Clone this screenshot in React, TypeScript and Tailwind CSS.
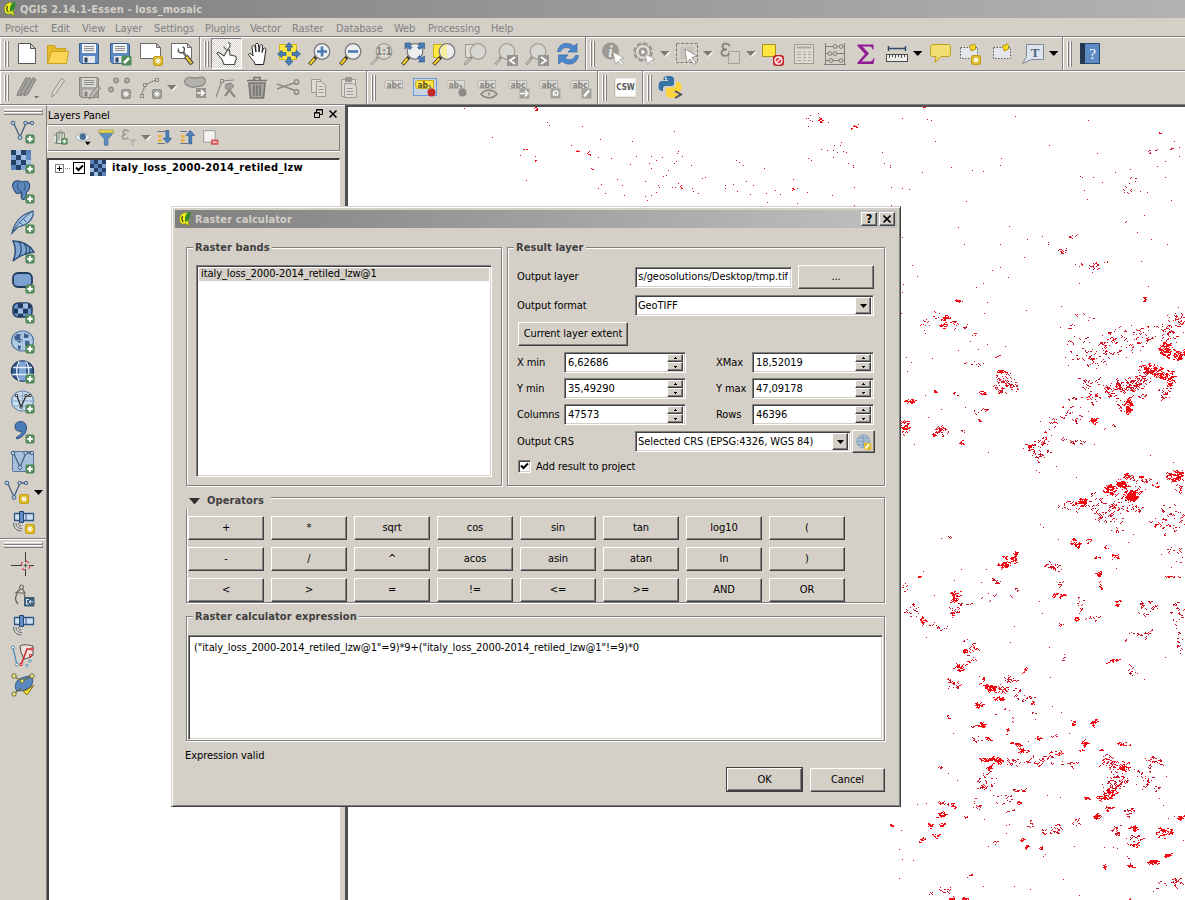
import React from "react";

/* ---------- map pixels ---------- */

// Each cluster: centre x, centre y, radius x, radius y, pixel count, rotation in degrees. Unit: a third of a pixel.
type Cluster = number[];

const northPoints =
  "372,25 623,67 628,76 726,79 457,112 541,166 586,169 588,182 558,241 693,136 774,172 780,118 813,175 877,124 1004,94 890,169 872,193 935,169 967,172 950,181 928,190 934,205 984,211 978,226 970,229 1015,154 1012,160 1026,169 1009,184 1004,190 1054,196 1088,235 1097,232 916,244 954,256 957,262 949,277 934,286 917,289 922,301 832,238 847,256 852,286 785,253 774,265 797,280 998,262 1005,262 1014,250 1057,265 1060,274 1074,280 1188,181 1197,187 1209,196 1272,205 1219,244 1239,256 1157,256 1157,265 1179,253 1192,274 1230,283 1280,280 1281,307 1306,271 1320,283 1359,238 1373,265 1373,310 1402,277 1477,286 1405,79 1398,55 1410,47 1406,54 1412,61 1418,64 1434,40 1437,52 1466,67 1443,148 1463,151 1482,136 1479,151 1479,172 1493,157 1500,136 1504,127 1510,154 1518,157 1404,175 1415,181 1525,190 1541,196 1541,202 1544,262 1544,316";
const eastPoints =
  "67,55 142,57 154,61 166,124 7,157 13,190 31,196 31,202 127,217 214,202 277,211 310,214 362,196 364,175 406,48 508,136 34,262 67,265 88,268 34,316 259,304 625,61 652,160 706,217 751,208 640,232 667,247 614,270 621,298 601,230 607,232 801,276 780,274 874,301 793,346 739,364 736,367 772,397 814,418 862,433 784,484 805,558 67,412 235,382 253,433 362,433 388,379 442,418 487,409 505,427 505,433 433,472 97,496 112,529 70,552 67,576 338,511 362,502 386,532 310,550 290,562 598,550 439,631 544,619 637,517 321,607 312,639 64,640 157,775 272,723 296,747 322,733 375,738 236,751 94,787 82,814 79,772 184,928 145,952 103,1033 324,1057 137,885 256,922 480,963 541,682 556,772 564,796 583,709 832,199 856,184 882,124 897,169 857,232 768,236 811,1066 880,1087 529,1099 589,1132 479,1117 470,1111 643,1033";
const southPoints =
  "530,19 478,36 470,31 589,52 482,193 491,201 535,238 184,235 130,334 245,328 320,328 305,367 224,361 163,407 140,532 404,499 391,547 508,562 478,424 488,461 512,652 793,658 856,592 388,751 517,738 544,757 221,820 205,940 232,961 113,1033 139,1029 65,1110 58,1168 68,1198 101,1202 58,1255 310,1280 404,1280 451,1288 598,1305 820,1295 550,1258 379,1095 313,1079 541,1012 503,1006 584,1158 673,1162 712,1164 700,1162 436,1162 325,1160 490,1190 497,1183 880,7 709,325 772,640 760,223 745,247 568,820 478,841 445,844 460,885 379,1120 388,1092 850,1035 838,1014 860,948 910,1140 882,1070 865,1075";

const northClusters: Cluster[] = [
  [588, 29, 9, 5, 11], [556, 148, 5, 2, 3], [588, 183, 3, 3, 3], [709, 157, 7, 4, 6, -30], [752, 165, 8, 3, 7],
  [752, 207, 3, 3, 3], [1026, 263, 6, 4, 7], [1440, 62, 8, 6, 16], [1542, 81, 15, 4, 10, -25], [1360, 272, 2, 8, 5],
];
const eastClusters: Cluster[] = [
  [140, 21, 12, 2, 4], [840, 101, 6, 3, 4], [815, 154, 16, 7, 7], [888, 142, 18, 7, 8],
  [740, 272, 22, 14, 10], [765, 240, 22, 12, 5], [574, 411, 15, 6, 10], [548, 453, 20, 7, 18], [640, 499, 20, 9, 24], [600, 495, 20, 6, 6],
  [680, 488, 8, 3, 3], [792, 592, 7, 4, 10], [238, 603, 20, 4, 14], [196, 655, 11, 9, 38], [190, 677, 16, 6, 16],
  [172, 642, 12, 14, 8], [225, 675, 40, 16, 26], [135, 675, 16, 24, 13], [286, 704, 9, 4, 8], [350, 772, 12, 4, 6],
  [290, 792, 26, 10, 12], [365, 815, 20, 6, 22], [375, 843, 32, 26, 88], [370, 870, 35, 16, 26], [410, 870, 8, 18, 12],
  [167, 877, 9, 3, 14], [306, 878, 10, 4, 14], [340, 865, 12, 12, 6], [230, 885, 10, 3, 5], [92, 905, 12, 11, 44], [75, 980, 13, 23, 80],
  [185, 990, 28, 16, 55], [165, 1003, 8, 6, 10], [244, 1028, 6, 6, 14], [293, 963, 6, 3, 6], [310, 931, 14, 6, 8], [285, 938, 14, 6, 5],
  [252, 994, 8, 4, 4], [578, 676, 12, 12, 9], [600, 745, 38, 45, 36], [655, 768, 50, 35, 76, -30], [725, 725, 75, 50, 110],
  [780, 705, 40, 35, 30], [620, 655, 40, 30, 10], [855, 700, 48, 36, 85], [856, 750, 22, 22, 130], [895, 768, 26, 14, 90],
  [895, 665, 22, 20, 40], [830, 815, 52, 16, 170, 22], [870, 845, 10, 20, 40], [805, 810, 28, 16, 60], [770, 845, 45, 24, 130, -15],
  [730, 860, 55, 20, 90], [705, 870, 32, 26, 75], [745, 920, 10, 26, 100], [720, 915, 18, 16, 20], [788, 890, 16, 6, 12],
  [855, 880, 22, 22, 40], [620, 850, 38, 20, 40], [640, 895, 28, 24, 36], [585, 918, 38, 38, 36, 30], [640, 962, 15, 8, 40],
  [590, 965, 22, 12, 12], [520, 965, 22, 26, 24], [500, 1015, 20, 18, 24], [590, 1025, 22, 8, 24], [555, 1015, 25, 12, 8],
  [480, 1050, 42, 28, 80], [448, 1045, 6, 12, 16], [690, 985, 20, 10, 7], [740, 1133, 10, 10, 20], [785, 1135, 10, 5, 12], [885, 1130, 30, 14, 50],
  [880, 640, 30, 30, 9],
];
const southClusters: Cluster[] = [
  [745, 50, 18, 14, 24], [725, 72, 18, 12, 90], [755, 107, 22, 15, 170], [745, 108, 50, 45, 90], [690, 90, 22, 16, 85],
  [650, 130, 45, 30, 60], [608, 126, 14, 14, 80], [570, 138, 30, 20, 32], [700, 140, 60, 25, 40], [690, 175, 48, 18, 46],
  [790, 60, 20, 10, 22], [825, 78, 10, 8, 14], [890, 52, 26, 22, 90], [900, 85, 12, 15, 18], [880, 180, 50, 45, 80], [830, 200, 24, 22, 22],
  [765, 145, 22, 10, 26], [720, 210, 25, 10, 12], [210, 232, 9, 9, 7], [588, 255, 22, 7, 38, 40], [625, 242, 10, 6, 10],
  [680, 263, 8, 6, 8], [704, 290, 14, 9, 22], [650, 295, 14, 4, 10], [518, 320, 28, 14, 42, 20], [405, 290, 8, 22, 48],
  [375, 313, 26, 10, 64, -15], [375, 292, 8, 5, 8], [355, 365, 22, 12, 18], [408, 390, 12, 6, 8], [656, 345, 8, 12, 28], [660, 375, 5, 10, 10],
  [225, 412, 18, 22, 62], [218, 455, 14, 18, 28], [250, 445, 32, 24, 20], [95, 455, 24, 16, 28], [118, 352, 8, 3, 6], [75, 385, 12, 20, 9],
  [129, 479, 10, 8, 28], [175, 500, 30, 12, 18], [345, 410, 50, 18, 12], [545, 372, 12, 8, 11], [540, 407, 20, 8, 28], [592, 476, 10, 6, 18],
  [600, 440, 16, 26, 20], [640, 475, 32, 8, 15], [712, 433, 8, 7, 18], [805, 440, 38, 24, 46], [890, 470, 24, 60, 40], [880, 350, 28, 3, 14],
  [880, 280, 30, 60, 20], [540, 500, 9, 14, 8], [550, 590, 8, 18, 5], [800, 520, 55, 14, 30, 8], [900, 550, 14, 30, 28], [735, 540, 5, 6, 4],
  [705, 603, 24, 6, 26], [755, 635, 12, 14, 16], [278, 572, 17, 27, 36], [254, 575, 9, 5, 30], [240, 620, 20, 13, 46], [270, 606, 5, 4, 7],
  [203, 658, 9, 4, 10], [222, 675, 18, 16, 28], [255, 541, 10, 4, 4], [330, 685, 22, 9, 85], [305, 670, 15, 22, 20], [355, 715, 16, 8, 40],
  [360, 690, 28, 16, 55], [390, 660, 18, 13, 32], [433, 630, 8, 6, 12], [400, 700, 30, 20, 20], [440, 715, 25, 7, 18], [460, 730, 8, 5, 12], [295, 737, 14, 8, 34],
  [205, 767, 9, 3, 6], [300, 797, 13, 6, 32], [285, 800, 14, 4, 5], [580, 790, 6, 10, 22], [640, 792, 14, 9, 28, -45], [322, 835, 6, 5, 12], [285, 836, 20, 8, 12],
  [375, 820, 12, 14, 9], [400, 853, 24, 5, 28], [470, 835, 10, 4, 16], [430, 873, 14, 8, 28], [615, 849, 10, 8, 34], [600, 872, 9, 4, 6], [666, 872, 8, 4, 12],
  [735, 852, 24, 6, 22], [525, 830, 8, 8, 8], [527, 880, 22, 7, 24], [333, 900, 34, 6, 90], [360, 908, 5, 12, 24], [329, 925, 8, 5, 38],
  [400, 905, 30, 14, 30], [480, 900, 40, 16, 54], [565, 910, 32, 10, 22, 15], [185, 922, 16, 5, 9], [320, 965, 35, 32, 60], [420, 990, 24, 10, 30],
  [370, 1015, 40, 16, 20], [418, 1028, 8, 5, 9], [290, 1030, 20, 18, 18], [395, 1052, 12, 5, 8], [200, 1030, 30, 9, 24, 15], [220, 1036, 6, 4, 12],
  [188, 1065, 14, 9, 42, -35], [155, 1098, 8, 6, 22], [184, 1095, 12, 6, 16], [126, 1140, 10, 6, 18, -40], [166, 1127, 8, 7, 16], [36, 1097, 5, 4, 9], [256, 1071, 8, 3, 6],
  [690, 910, 34, 24, 85], [730, 922, 20, 18, 55], [705, 970, 40, 28, 115, -25], [685, 1005, 32, 12, 105, -30], [688, 1042, 12, 4, 20],
  [650, 1070, 10, 7, 46], [620, 1016, 10, 5, 12], [790, 950, 34, 45, 46], [825, 905, 30, 14, 44], [830, 985, 12, 12, 12], [742, 1058, 17, 12, 30], [760, 1105, 12, 8, 40],
  [715, 1110, 16, 18, 30], [765, 1135, 28, 12, 26], [762, 1156, 18, 3, 28], [855, 1120, 24, 16, 65], [902, 1073, 11, 5, 28], [860, 1187, 13, 6, 34],
  [820, 1206, 17, 5, 65, -12], [754, 1220, 9, 6, 16], [675, 1220, 3, 9, 12], [450, 1092, 10, 12, 14], [530, 1110, 20, 22, 34], [495, 1120, 12, 18, 12],
  [585, 1090, 26, 14, 14], [425, 1140, 7, 5, 10], [437, 1160, 7, 4, 12], [485, 1167, 8, 4, 8], [345, 1148, 9, 8, 8], [260, 1248, 14, 4, 7], [890, 1265, 22, 14, 34],
  [190, 1288, 20, 12, 20], [215, 1317, 14, 4, 30], [255, 1317, 14, 4, 28], [155, 1300, 12, 6, 5], [840, 1275, 25, 12, 8], [748, 1200, 8, 18, 7],
  [750, 1315, 3, 3, 3], [380, 780, 35, 30, 8], [470, 765, 25, 20, 6],
];

function buildPixels() {
  let seed = 20142;
  const rnd = () => {
    seed = (seed * 1664525 + 1013904223) % 4294967296;
    return seed / 4294967296;
  };
  let bright = "";
  let dim = "";
  const addPoints = (text: string, ox: number, oy: number) => {
    text.split(" ").forEach((pair) => {
      const [x, y] = pair.split(",").map(Number);
      dim += `M${Math.floor(ox + x / 3)} ${Math.floor(oy + y / 3)}h1v1h-1z`;
    });
  };
  const addClusters = (list: Cluster[], ox: number, oy: number) => {
    list.forEach(([cx, cy, rx, ry, n, rot = 0]) => {
      const a = (rot * Math.PI) / 180;
      const dense = n / (rx * ry) > 0.15;
      let x = 0;
      let y = 0;
      for (let i = 0; i < n; i++) {
        // Pixels grow in short diagonal streaks, each streak starting at a fresh place in the cluster.
        if (i > 0 && rnd() < 0.5) {
          x += rnd() < 0.6 ? 1 : -1;
          y += Math.floor(rnd() * 3) - 1;
        } else {
          const r = (rnd() + rnd()) * 0.62;
          const t = rnd() * Math.PI * 2;
          const dx = Math.cos(t) * r * rx;
          const dy = Math.sin(t) * r * ry;
          x = Math.floor(ox + (cx + dx * Math.cos(a) - dy * Math.sin(a)) / 3);
          y = Math.floor(oy + (cy + dx * Math.sin(a) + dy * Math.cos(a)) / 3);
        }
        const w = rnd() < (dense ? 0.35 : 0.1) ? 2 : 1;
        const d = `M${x} ${y}h${w}v1h-${w}z`;
        if (dense || rnd() < 0.3) bright += d;
        else dim += d;
      }
    });
  };
  addPoints(northPoints, -8, -7);
  addPoints(eastPoints, 532, -7);
  addPoints(southPoints, 532, 353);
  addClusters(northClusters, -8, -7);
  addClusters(eastClusters, 532, -7);
  addClusters(southClusters, 532, 353);
  return { bright, dim };
}

const pixels = buildPixels();

/* ---------- icons ---------- */

function Ic({ children, s = 24 }: { children: React.ReactNode; s?: number }) {
  return (
    <svg width={s} height={s} viewBox="0 0 24 24" fill="none" className="shrink-0 overflow-visible">
      {children}
    </svg>
  );
}

const Plus = ({ x = 14.5, y = 14.5 }: { x?: number; y?: number }) => (
  <g>
    <rect x={x + 0.5} y={y + 0.5} width="8" height="8" rx="1" fill="#5c9463" stroke="#467a4c" />
    <path d={`M${x + 4.5} ${y + 1.8}v5.400M${x + 1.8} ${y + 4.5}h5.400`} stroke="#fff" strokeWidth="2" />
  </g>
);
const Star = ({ x = 14, y = 14, gray = false }: { x?: number; y?: number; gray?: boolean }) => (
  <g>
    <rect x={x + 0.5} y={y + 0.5} width="9" height="9" rx="1.5" fill={gray ? "#a3a19c" : "#dcb92a"} stroke={gray ? "#8f8d88" : "#c2a014"} />
    <path
      d={`M${x + 5} ${y + 2}v6M${x + 2} ${y + 5}h6M${x + 3} ${y + 3}l4 4M${x + 7} ${y + 3}l-4 4`}
      stroke="#fff"
      strokeWidth="1"
    />
  </g>
);
const G = "#8c8a85";
const LENS = "#eceef0";

const Lens = ({ gray = false, x = 14, children }: { gray?: boolean; x?: number; children?: React.ReactNode }) => (
  <g>
    <path d={`M${x - 6} 15L1.5 22.5`} stroke={gray ? "#8c8a85" : "#3b3520"} strokeWidth={gray ? 2.6 : 3.6} />
    <path d={`M${x - 7.5} 16.5L2 22`} stroke={gray ? "#cfccc5" : "#f6cf2b"} strokeWidth={gray ? 1.2 : 2.2} />
    <circle cx={x} cy="9.5" r="7.8" fill={gray ? "#d8d6d0" : LENS} stroke={gray ? "#a3a19b" : "#77797b"} strokeWidth="1.3" />
    {children}
  </g>
);

const Floppy = ({ gray = false }: { gray?: boolean }) => (
  <g>
    <path d="M2.5 1.5h18l1 1v19h-17l-2-2z" fill={gray ? "#a9a7a2" : "#5b88c0"} stroke={gray ? "#85837e" : "#3a608f"} />
    <rect x="5" y="2" width="14" height="9" fill={gray ? "#dbd8d1" : "#f1f2f4"} />
    <path d="M7 4.5h10M7 6.5h10M7 8.5h10" stroke="#8b8d90" />
    <rect x="6" y="14" width="12" height="7" fill={gray ? "#d2cfc8" : "#e3e5e8"} />
    <rect x="7.5" y="15.5" width="3" height="5" fill={gray ? "#85837e" : "#2c4566"} />
  </g>
);

const I: Record<string, React.ReactNode> = {
  fresh: <path d="M3.500 1.500h12l5 5v15h-17zM15.500 1.500v5h5" fill="#fff" stroke="#55575a" />,
  open: (
    <g stroke="#c9a21c">
      <path d="M1.500 20.500v-17h7l2 3h9v4" fill="#e6b82c" />
      <path d="M1.500 21.500l4-12h17l-2 12z" fill="#fcd558" />
    </g>
  ),
  save: <Floppy />,
  saveAs: (
    <g>
      <Floppy />
      <rect x="13.500" y="13.500" width="10" height="10" rx="1.500" fill="#4f8a57" />
      <path d="M16 21l5-5" stroke="#fff" strokeWidth="2.500" />
    </g>
  ),
  composer: (
    <g>
      <path d="M1.500 1.500h16l4 4v11h-20zM17.500 1.500v4h4" fill="#fff" stroke="#6b6c6e" />
      <Star />
    </g>
  ),
  composerMgr: (
    <g>
      <path d="M1.500 1.500h16l4 4v11h-20zM17.500 1.500v4h4" fill="#fff" stroke="#6b6c6e" />
      <path d="M13 10l3 4" stroke="#6f747a" strokeWidth="2.500" />
      <path d="M16 14l6 8" stroke="#3c3c3a" strokeWidth="4.500" />
      <path d="M16.500 14.700l5 6.700" stroke="#f1c83a" strokeWidth="2.400" />
      <path d="M8.500 6.500c-1 3 1 5 4.500 4M12.500 5c2.500.5 2.500 3 1 5" stroke="#50545a" strokeWidth="1.400" />
    </g>
  ),
  touch: (
    <path
      d="M9 22.500l-2-5-5-6c.5-1.500 2-1 3.500 0L9 14l3-5.500 2.500-.5.5 5 5 1c1.500 1 1.500 3 .5 5l-1 3.500zM8.500 4.500l2.500 3M12 8l3-3.500V1.500l-2-1"
      stroke="#4d4d4b"
      strokeWidth="1.100"
      fill="#fff"
    />
  ),
  pan: (
    <path
      d="M9 22.500c0-3-5-7-6.500-10 1-2 3-.5 4.500 1.500L6 5c.5-2 2.500-2 3 0l1 5-.5-7.500c.7-1.700 2.500-1.600 3 0l.5 7.500 1-6.500c.8-1.500 2.500-1 2.600.6L16 10.500l1.500-4c1-1 2.500-.4 2.400 1L18.500 17l-1 5.500z"
      fill="#fff"
      stroke="#222"
    />
  ),
  panSel: (
    <g>
      <rect x="2.500" y="2.500" width="17" height="15" fill="#ffe640" stroke="#cdb41e" />
      <g fill="#4a7db5" stroke="#2f5a8c" strokeWidth=".7">
        <path d="M12 0.500l4 4.500h-2.500v4h-3V5H8zM12 23.500l4-4.500h-2.500v-4h-3v4H8zM.5 12l4.500-4v2.500h4v3H5V16zM23.500 12L19 8v2.500h-4v3h4V16z" />
      </g>
    </g>
  ),
  zoomIn: (
    <Lens>
      <path d="M14 4.500v10M9 9.500h10" stroke="#4579b0" strokeWidth="2.600" />
    </Lens>
  ),
  zoomOut: (
    <Lens>
      <path d="M9 9.500h10" stroke="#4579b0" strokeWidth="2.600" />
    </Lens>
  ),
  zoomNative: (
    <Lens gray>
      <text x="14" y="13" textAnchor="middle" className="text-[10px] font-bold" fill="#85837e">
        1:1
      </text>
    </Lens>
  ),
  zoomFull: (
    <g>
      <Lens />
      <g fill="#4a7db5" stroke="#2f5a8c" strokeWidth=".7">
        <path d="M4 1h6L8.500 3l2.500 2.500L9 7.500 6.500 5 4 7zM23.500 1h-6L19 3l-2.500 2.500 2 2L21 5l2.500 2zM23.500 20h-6l1.500-2-2.500-2.500 2-2L21 16l2.500-2z" />
      </g>
    </g>
  ),
  zoomSel: (
    <g>
      <rect x="1.500" y="2.500" width="14" height="13" fill="#ffe640" stroke="#c9b020" />
      <Lens x={15}>
        <path d="M9 5l6-3v15l-6-4z" fill="#f6ec9b" />
      </Lens>
    </g>
  ),
  zoomLayer: (
    <g>
      <rect x="2.500" y="2.500" width="14" height="13" fill="#dedbd4" stroke="#9c9a94" />
      <Lens gray x={15} />
    </g>
  ),
  zoomLast: (
    <g>
      <Lens gray x={13} />
      <rect x="13" y="13" width="11" height="11" fill="#96948f" />
      <path d="M21 15l-5 3.500 5 3.500" stroke="#fff" strokeWidth="1.800" />
    </g>
  ),
  zoomNext: (
    <g>
      <Lens gray x={13} />
      <rect x="13" y="13" width="11" height="11" fill="#96948f" />
      <path d="M16 15l5 3.500-5 3.500" stroke="#fff" strokeWidth="1.800" />
    </g>
  ),
  refresh: (
    <g fill="#4d87cb" stroke="#3566a5" strokeWidth=".7">
      <path d="M1.500 9.500C3 3 7 1 12 1.500c3 .3 4.500 1.500 6 2.700L21 1.500V10h-9l3-3c-4-2.700-9-1.500-10.500 2.500z" />
      <path d="M22.500 13.500C21 20 17 22.500 12 22c-3-.3-4.500-1.500-6-2.700L2.500 22v-9H12l-3 3.300c4 2.700 9 1.500 10.500-2.800z" />
    </g>
  ),
  identify: (
    <g>
      <circle cx="9.500" cy="9" r="8.500" fill="#9b9994" />
      <text x="9.500" y="14.500" textAnchor="middle" className="font-['Liberation_Serif'] text-[16px] font-bold italic" fill="#e9e7e2">
        i
      </text>
      <path d="M12 10l11 6-4.500 1.500 4 4.500-2 1.500-3.500-4.500-2.500 3.500z" fill="#fff" stroke="#a19f99" strokeWidth=".8" />
    </g>
  ),
  action: (
    <g>
      <circle cx="11" cy="10" r="8.700" stroke="#98968f" strokeWidth="2.200" strokeDasharray="4.500 2.330" />
      <circle cx="11" cy="10" r="7.600" fill="#dcd9d2" stroke="#98968f" />
      <circle cx="11" cy="10" r="4.500" fill="#98968f" />
      <path d="M9.500 7.500v5l4-2.500z" fill="#fff" />
      <path d="M13 12l10 5-4 1.500 3.500 4-1.500 1-3.500-4-2 3z" fill="#fff" stroke="#a19f99" strokeWidth=".8" />
    </g>
  ),
  select: (
    <g>
      <rect x="1.500" y="1.500" width="21" height="19" stroke="#7b7974" strokeDasharray="3 1.500" />
      <path d="M5 5h14v12H5z" fill="#c6c3bc" />
      <path d="M10 7l12 7-5 1.500 4 5.500-2 1.500-4-5.500-3 4z" fill="#fff" stroke="#92908b" strokeWidth=".9" />
    </g>
  ),
  epsilon: (
    <g>
      <rect x="10.500" y="9.500" width="11" height="12" stroke="#a5a39d" />
      <path d="M12 4C10 .5 4.500 1 4.500 4.500c0 2 2 3 4.500 3-3.500 0-5.500 1-5.500 3.200C3.500 14.500 9.500 15 11.500 11.500" stroke="#85837e" strokeWidth="1.900" />
    </g>
  ),
  deselect: (
    <g>
      <rect x="1.500" y="2.500" width="13" height="12" fill="#ffe640" stroke="#a5941f" />
      <rect x="12.500" y="13.500" width="10" height="10" rx="2" fill="#d9353c" stroke="#b5252c" />
      <circle cx="17.500" cy="18.500" r="3.500" stroke="#fff" strokeWidth="1.300" />
      <path d="M15 21l5-5" stroke="#fff" strokeWidth="1.300" />
    </g>
  ),
  table: (
    <g>
      <rect x="2.500" y="2.500" width="19" height="19" fill="#dedbd4" stroke="#9c9a94" />
      <path d="M4.500 5.500h15" stroke="#a9a7a1" strokeWidth="2" />
      <path d="M5 10h4M5 12.500h4M5 15.500h4M5 18.500h4M11 10h3M11 12.500h3M11 15.500h3M11 18.500h3M16 10h3M16 12.500h3M16 15.500h3M16 18.500h3" stroke="#a9a7a1" />
    </g>
  ),
  abacus: (
    <g stroke="#7f7d78">
      <path d="M2.500 1v21M21.500 1v21M2 4.500h20M2 11.500h20M2 18.500h20M1 22.500h22" />
      <g fill="#d4d0c8">
        <circle cx="12" cy="4.500" r="1.900" />
        <circle cx="18" cy="4.500" r="1.900" />
        <circle cx="7" cy="11.500" r="1.900" />
        <circle cx="12" cy="11.500" r="1.900" />
        <circle cx="8" cy="18.500" r="1.900" />
        <circle cx="18" cy="18.500" r="1.900" />
      </g>
    </g>
  ),
  sigma: (
    <path
      d="M3.500 2.500h16v5h-1c-.5-2.500-1.500-3-4-3H8.500l6.500 7-7.500 8h7.500c3 0 4-1 4.500-3.500h1l-1 6H3.500v-1.500L11 12 3.500 4z"
      fill="#8f1b95"
    />
  ),
  ruler: (
    <g>
      <path d="M3.500 6.500h17M3.500 4v5M20.500 4v5" stroke="#2f4d6b" strokeWidth="1.500" />
      <rect x="1.500" y="12.500" width="21" height="7" fill="#ededea" stroke="#4a4c4e" />
      <path d="M4.500 13v3M7.500 13v2M10.500 13v3M13.500 13v2M16.500 13v3M19.500 13v2" stroke="#4a4c4e" />
    </g>
  ),
  tips: <path d="M5 2.500h15c2 0 2.500 1 2.500 2.500v7c0 1.500-1 2.500-2.500 2.500h-7L7 20.500l1-6H5C3.500 14.500 2.500 14 2.500 12V5C2.500 3.500 3.500 2.500 5 2.500z" fill="#f2df72" stroke="#c0a01a" />,
  bookmarkNew: (
    <g>
      <rect x="1.500" y="5.500" width="17" height="11" fill="#e3e6ea" stroke="#5a5c60" strokeDasharray="1.500 1.500" />
      <path d="M10.500 4.500c0-1 1.500-2 2.500-.5 1-3 3.500-2 3.500 0v3l-4 2z" fill="#fbdc20" stroke="#ab8f10" />
      <Star x={12} y={13} />
    </g>
  ),
  bookmark: (
    <g>
      <rect x="3.500" y="5.500" width="17" height="11" fill="#e3e6ea" stroke="#5a5c60" strokeDasharray="1.500 1.500" />
      <path d="M12.500 4.500c0-1 1.500-2 2.500-.5 1-3 3.500-2 3.500 0v3l-4 2z" fill="#fbdc20" stroke="#ab8f10" />
    </g>
  ),
  annot: (
    <g>
      <path d="M5.500 2.500h17v15h-12l-9 4 4-7z" fill="#dde4ee" stroke="#7d8896" />
      <text x="14" y="14.500" textAnchor="middle" className="font-['Liberation_Serif'] text-[13px] font-bold" fill="#4f5f75">
        T
      </text>
    </g>
  ),
  help: (
    <g>
      <rect x="2.500" y="1.500" width="19" height="20" fill="#5d8cc4" stroke="#2b4a6d" />
      <rect x="2" y="1" width="5" height="21" fill="#24384f" />
      <text x="14.500" y="16.500" textAnchor="middle" className="font-['Liberation_Serif'] text-[15px]" fill="#fff">
        ?
      </text>
    </g>
  ),
  pencils: (
    <g stroke="#85837e" fill="#a3a19c">
      <path d="M2 20l1-4L11 1.500l3 2L6 18zM9 20l1-4L18 1.500l3 2L13 18z" />
      <path d="M5 20l1-4L14 1.500l3 2L9 18z" />
      <path d="M19 20h5l-2.500 2.500z" stroke="none" fill="#6f6d68" />
    </g>
  ),
  pencil: <path d="M5.500 21l1-5L15.500 2.500l3 2-9 13.500z" stroke="#98968f" fill="#d9d6cf" />,
  saveEdits: (
    <g>
      <Floppy gray />
      <path d="M12 23l1.500-5 7-8 3 2-7 9z" fill="#b8b6b0" stroke="#85837e" />
    </g>
  ),
  addPoint: (
    <g>
      <g stroke={G} strokeWidth="1.300" fill="#b4b2ac">
        <circle cx="8" cy="4.500" r="2.300" />
        <circle cx="19" cy="4.500" r="2.300" />
        <circle cx="3" cy="13.500" r="2.300" />
      </g>
      <Star gray x={13} y={13} />
    </g>
  ),
  addLine: (
    <g stroke={G} fill="#d4d0c8">
      <path d="M3 20c0-7 4-13 14-16" strokeWidth="1.200" fill="none" />
      <rect x="1.500" y="18.500" width="3" height="3" />
      <rect x="4.500" y="7.500" width="3" height="3" />
      <rect x="16.500" y="2.500" width="3" height="3" />
      <Star gray x={13} y={13} />
    </g>
  ),
  move: (
    <g>
      <path d="M3 3c3-3 6-1 9-1s6-2 9 0c3 3 0 8-4 8-3 0-6 2-9 1S-1 8 3 3z" fill="#b3b1ab" stroke={G} strokeWidth="1.300" />
      <path d="M13 12h10v10H13z" fill="#96948f" />
      <path d="M14 17h7M18 14l3 3-3 3" stroke="#fff" strokeWidth="1.700" />
    </g>
  ),
  node: (
    <g stroke={G} fill="#d4d0c8">
      <path d="M2 21L8 5l12-1" strokeWidth="1.200" fill="none" />
      <rect x="6.500" y="3.500" width="3" height="3" />
      <path d="M12 10l9 11M19 9l-8 11" strokeWidth="2.200" fill="none" />
      <path d="M12 8l5-1 3 3-4 4-5-2z" fill="#a3a19c" />
    </g>
  ),
  trash: (
    <g stroke="#75736e" strokeWidth="1.600">
      <path d="M4 7l1.500 15h13L20 7z" fill="#a5a39e" />
      <path d="M2 4.500h20M9 4V1.500h6V4M9 9v11M12 9v11M15 9v11" />
    </g>
  ),
  cut: (
    <g stroke={G} strokeWidth="1.500">
      <path d="M1 8l17 6M1 13l17-6" />
      <circle cx="20.500" cy="6" r="2.200" />
      <circle cx="20.500" cy="16" r="2.200" />
    </g>
  ),
  copy: (
    <g stroke="#9c9a94" fill="#dedbd4">
      <path d="M4.500 3.500h9v13h-9z" />
      <path d="M9.500 5.500h5l4 4v11h-9z" />
      <path d="M11.500 10.500h4M11.500 13.500h5M11.500 16.500h5" />
    </g>
  ),
  paste: (
    <g stroke="#9c9a94" fill="#dedbd4">
      <path d="M3.500 3.500h14v17h-14z" />
      <path d="M7.500 1.500h6v4h-6z" fill="#98968f" />
      <path d="M6.500 7.500h8l4 3v11h-12z" />
      <path d="M8.500 12.500h6M8.500 15.500h7M8.500 18.500h7" />
    </g>
  ),
  python: (
    <g>
      <path d="M10 0c4 0 5 1.500 5 3.500v4c0 2-1.500 2.500-3 2.500H7c-2 0-3 1-3 3v2H2.500C.5 15-.5 12.500-.5 9.500S1 5 3 5h6V4H4.500V3C4.500 1 6 0 10 0z" fill="#3572a5" />
      <path d="M17 6h2c2.500 0 3.500 2.500 3.500 5s-1 5-3 5h-6v1H18v1.500c0 2-2 3.500-5.500 3.500S7 20.500 7 18.500v-4c0-2 1-3 3-3h4c2 0 3-1 3-3z" fill="#ffd43b" />
      <circle cx="7" cy="2.500" r="1" fill="#fff" />
      <path d="M16 15l6 3.500-6 3.500" stroke="#55534e" strokeWidth="2" />
    </g>
  ),
};

function Label({ tone, extra }: { tone: "abc" | "ab" | "hot"; extra?: string }) {
  const hot = tone === "hot";
  return (
    <Ic>
      {hot && <rect x="-.5" y="2.500" width="23" height="17" fill="#c8d2e0" stroke="#6b9ad6" />}
      <path d="M3 4.500h16.500v8H3c-2-2-2-6 0-8z" fill={hot ? "#ffe640" : "#dedbd5"} stroke={hot ? "#c2ab22" : "#b5b3ad"} />
      <text x="3.500" y="11.500" className="text-[8.500px] font-bold" fill={hot ? "#5c5320" : "#85837e"}>
        {tone === "abc" ? "abc" : "ab"}
      </text>
      {extra === "pin" && <circle cx="17.500" cy="16.500" r="4" fill={hot ? "#c22a2a" : "#8c8a85"} />}
      {extra === "pin" && <path d="M17 12l-2-3" stroke="#8c8a85" strokeWidth="2" />}
      {extra === "eye" && <path d="M5 18c4-5 12-5 16 0-4 5-12 5-16 0zM13 16.500v3" stroke="#85837e" strokeWidth="1.400" fill="#d4d0c8" />}
      {extra && extra !== "pin" && extra !== "eye" && <rect x="12.500" y="12.500" width="10" height="10" fill="#a3a19b" />}
      {extra === "move" && <path d="M13 17.500h8M18 14.500l3 3-3 3" stroke="#fff" strokeWidth="1.600" />}
      {extra === "turn" && <path d="M16 20c-3-5 4-7 4-3s-4 2-3 0" stroke="#fff" strokeWidth="1.300" />}
      {extra === "edit" && <path d="M15 20.500l5-6" stroke="#fff" strokeWidth="2.200" />}
    </Ic>
  );
}

const Vee = () => (
  <g stroke="#44617f" fill="#b9cfe8">
    <path d="M2.500 3L9 17l6-14h5" fill="none" strokeWidth="1.300" />
    <circle cx="2" cy="3" r="1.900" />
    <circle cx="9" cy="17.500" r="1.900" />
    <circle cx="14.500" cy="3" r="1.700" />
    <circle cx="21" cy="3" r="1.700" />
  </g>
);
const Checks = ({ x, y, c, flip = 0 }: { x: number; y: number; c: number; flip?: number }) => (
  <g>
    {Array.from({ length: 16 }, (_, i) => {
      const col = i % 4;
      const row = Math.floor(i / 4);
      const dark = (col + row + flip) % 2 === 0;
      return (
        <rect
          key={i}
          x={x + col * c}
          y={y + row * c}
          width={c}
          height={c}
          fill={dark ? (row === 1 && col === 3 ? "#5f88be" : "#24416a") : ["#5b84bb", "#a3bfe2", "#7ea3d3"][(col + row * 2) % 3]}
        />
      );
    })}
  </g>
);
const Sat = () => (
  <g>
    <path d="M3.500 3.500h19v7h-19z" fill="#cfe0f4" stroke="#2c5582" strokeWidth="1.300" />
    <path d="M8.500 1.500h4v11h-4z" fill="#5b8cc4" stroke="#24476e" />
    <path d="M15 4v6" stroke="#2c5582" />
    <path d="M2.500 13c0 5 3 8 8 8M5 13c0 3.500 2.500 5.500 6 5.500M7.500 13c0 2 1 3 3 3" stroke="#5f6770" />
  </g>
);

const side: React.ReactNode[] = [
  <g><Vee /><Plus /></g>,
  <g><Checks x={0} y={0} c={5} /><Plus /></g>,
  <g>
    <path d="M3 2c3-2 6-1 8 0 3-1.500 6-.5 7 1 1.500 4 0 8-2.500 9L15 18c-1 2-4 2-4.500 0l-.5-6c-3 2-5 2-5.500 0C2 9 .5 5 3 2z" fill="#5b88bd" stroke="#2e5078" strokeWidth="1.200" />
    <path d="M7 3c-1 4 0 7 3 8.500M13 3c2 3 1 6 0 8M11 12v4" stroke="#2e5078" />
    <Plus />
  </g>,
  <g>
    <path d="M1 23C3 14 8 5 22 1c1 7-4 14-15 16z" fill="#a9c6e6" stroke="#345a85" strokeWidth="1.200" />
    <path d="M1 23C6 14 12 8 22 1M8 12l4 3M12 8l3 4" stroke="#345a85" />
    <Plus />
  </g>,
  <g>
    <path d="M2 1c8 0 16 3 21 11-7 1-15 4-21 9 3-7 3-14 0-20z" fill="#7fa6d4" stroke="#284b73" strokeWidth="1.400" />
    <path d="M8 2c3 5 3 10 0 14M13 3.500c3 4 3 8 1 10.500M18 7c1 2 1 4 0 6" stroke="#284b73" strokeWidth="1.200" />
    <Plus />
  </g>,
  <g><rect x="2" y="3" width="19" height="14" rx="5" fill="#7ba0d2" stroke="#203a5e" strokeWidth="1.800" /><Plus /></g>,
  <g>
    <rect x="2" y="3" width="19" height="14" rx="5" fill="#6d96cc" stroke="#203a5e" strokeWidth="1.500" />
    <path d="M7 3.500h5v5H7zM17 4h3v4.500h-3zM3 8.500h4v5H3zM12 8.500h5v5h-5zM7 13.500h5v3.500H7z" fill="#203a5e" />
    <path d="M12 3.500h5v5h-5zM7 8.500h5v5H7z" fill="#a3bfe2" />
    <Plus />
  </g>,
  <g>
    <ellipse cx="11.500" cy="11" rx="11" ry="10" fill="#b4cce6" stroke="#52789f" strokeWidth="1.200" />
    <path d="M3 7l3-3 4 0-1 4 2 2-2 3-2-1-3-2zM13 3l5 2-1 3-4 0zM14 11l4 0 1 4-3 3-2-3zM7 15l3 1-1 4-2-1z" fill="#3d638e" />
    <path d="M1 10.500h21M11.500 1v20" stroke="#8fb0d3" strokeWidth=".8" />
    <Plus />
  </g>,
  <g>
    <ellipse cx="11.500" cy="11" rx="11" ry="10" fill="#345f93" stroke="#203a5e" strokeWidth="1.400" />
    <path d="M8 1.500h7v19H8z" fill="#7fa6d4" />
    <path d="M2 7.500h19M1 14.500h21M8 1.500c-3 6-3 13 0 19M15.500 1.500c3 6 3 13 0 19" stroke="#e6eef8" strokeWidth="1.400" />
    <Plus />
  </g>,
  <g>
    <ellipse cx="11.500" cy="11" rx="11" ry="10" fill="#c8dbee" stroke="#6d8cab" strokeWidth="1.200" />
    <path d="M1 11h21M11.500 1v20M3 6h17M3 16h17" stroke="#89a8c8" />
    <path d="M6 6l4 11 5-11h3" stroke="#222" strokeWidth="1.200" />
    <path d="M4.500 4.500h2v2h-2zM9 16h2v2H9zM14 4.500h2v2h-2zM18 4.500h2v2h-2z" fill="#fff" stroke="#222" strokeWidth=".8" />
    <Plus />
  </g>,
  <g>
    <path d="M5 17.500c4-2 6-4 5.500-6.500C6 12 4 9.500 4 6.500c0-3 2.500-5 5.500-5 3.500 0 6 2.500 6 6.500 0 5-4 9.500-9.500 11z" fill="#4a7bb5" stroke="#2c4f7a" />
    <Plus />
  </g>,
  <g><rect x="1.500" y="1.500" width="21" height="20" rx="1" fill="#a8c0dc" stroke="#56779b" /><Vee /><Plus /></g>,
  <g transform="translate(-6 0)"><Vee /><Star x={14} y={14} /></g>,
  <g><Sat /><Star x={14} y={14} /></g>,
];
const sideLower: React.ReactNode[] = [
  <g>
    <path d="M14.500-2v10M14.500 15v7M0 11.500h11M18 11.500h5" stroke="#3b3b39" />
    <path d="M14.500 9.500v4M12.500 11.500h4" stroke="#3b3b39" strokeWidth=".8" />
    <circle cx="14.500" cy="11.500" r="4.500" stroke="#d8444a" strokeWidth="1.200" strokeDasharray="3.500 3.570" />
  </g>,
  <g>
    <circle cx="10.500" cy="3" r="2" stroke="#5f5d58" />
    <path d="M9.500 5L5 9h9l-2.500-4M6 10c-3 5-1 8 1 10M13 10c1 2 1.500 3 1 4" stroke="#5f5d58" strokeWidth="1.200" />
    <rect x="13" y="13" width="10.500" height="9.500" rx="1" fill="#3a5d78" />
    <path d="M15 15.500h3M15 20h3M15.500 15.500v4.500M22 17.800h-4M20 16l-2 1.800 2 1.800" stroke="#dfe8f0" />
  </g>,
  <Sat />,
  <g>
    <path d="M2 4l4 17" stroke="#4a8ab8" strokeWidth="1.200" />
    <circle cx="2" cy="3.500" r="1.500" fill="#fff" stroke="#4a8ab8" />
    <circle cx="6" cy="20.500" r="1.500" fill="#fff" stroke="#4a8ab8" />
    <path d="M9 2c4-2 9-1 13 0v9c-2 3-6 3-9 4L10 8z" fill="#efe3de" stroke="#4f4d49" />
    <path d="M10 21l6-16h5" stroke="#d3262d" strokeWidth="1.500" />
    <path d="M9 19.500h2v2H9zM18.500 10.500h2v2h-2zM20 4h2v2h-2z" fill="#fff" stroke="#d3262d" />
    <circle cx="19" cy="17" r="1.200" fill="#fff" stroke="#4a8ab8" />
    <circle cx="16" cy="21.500" r="1.200" fill="#fff" stroke="#4a8ab8" />
  </g>,
  <g>
    <path d="M5 9c2-5 8-6 14-7 4 2 3 7 1 10-3 4-10 5-14 5-2-2-2-5-1-8z" fill="#5b88c0" stroke="#37588a" />
    <path d="M2 2l9 5 10-5M3 20l7-6" stroke="#6e6a3c" strokeWidth="1.200" />
    <g fill="#eae887" stroke="#6e6a3c">
      <circle cx="3" cy="2" r="2.200" />
      <circle cx="21" cy="2" r="2.200" />
      <circle cx="11" cy="7" r="2" />
      <circle cx="3" cy="20" r="2.200" />
    </g>
    <path d="M12 17l4 4 7-10-7 5z" fill="#fbe438" stroke="#7b6b17" />
  </g>,
];

function QLogo() {
  return (
    <svg width="16" height="16" viewBox="0 0 16 16" className="shrink-0">
      <path d="M9 1.500C4 1.500 2 5.500 2.500 9.500c.5 3.500 4 4.500 6 3l4 2.500-1.500-4.500C13 6 12.500 2 9 1.500z" fill="#f3ee1f" stroke="#6f8a1a" strokeWidth=".7" />
      <path d="M13.500.5C9 2 7.500 5 8 11c3-1 6-4 5.500-10.500z" fill="#2c8a2a" />
      <path d="M5.500 5c-1 2.500-.5 5 1 6" stroke="#4d4a10" strokeWidth="1.300" fill="none" />
    </svg>
  );
}

/* ---------- toolbar pieces ---------- */

const Slot = ({ children }: { children: React.ReactNode }) => (
  <div className="flex h-[30px] w-[31px] shrink-0 items-center justify-center">{children}</div>
);
const Drop = ({ dark = false }: { dark?: boolean }) => (
  <div className="flex h-[30px] w-[12px] shrink-0 items-center justify-center">
    <svg width="10" height="6" viewBox="0 0 10 6" className="overflow-visible">
      {!dark && <path d="M1 1h9.500L5.700 6z" fill="#fff" />}
      <path d="M0 0h9.500L4.700 5z" fill={dark ? "#000" : "#7b7974"} />
    </svg>
  </div>
);
const Grip = () => (
  <div className="mr-[2px] ml-[3px] flex h-[26px] shrink-0 gap-px">
    <div className="w-[2px] border-r border-l border-r-[#808080] border-l-white" />
    <div className="w-[2px] border-r border-l border-r-[#808080] border-l-white" />
  </div>
);
const Bar = ({ children, w = "" }: { children: React.ReactNode; w?: string }) => (
  <div className={`flex h-full shrink-0 items-center border-r border-l border-r-[#808080] border-l-white ${w}`}>
    <Grip />
    {children}
  </div>
);
const Pick = ({ names }: { names: string[] }) => (
  <>
    {names.map((n, i) => (
      <Slot key={i}>
        <Ic>{I[n]}</Ic>
      </Slot>
    ))}
  </>
);

/* ---------- dialog pieces ---------- */

const Btn = ({ children, c }: { children?: React.ReactNode; c: string }) => (
  <button
    className={`flex items-center justify-center border border-t-white border-r-[#404040] border-b-[#404040] border-l-white bg-[#d4d0c8] shadow-[inset_-1px_-1px_0_#808080] ${c}`}
  >
    {children}
  </button>
);
const sunken =
  "border border-t-[#808080] border-r-white border-b-white border-l-[#808080] bg-white shadow-[inset_1px_1px_0_#404040,inset_-1px_-1px_0_#d4d0c8]";

const Box = ({ title, c, children }: { title: string; c: string; children: React.ReactNode }) => (
  <div className={`flex flex-col border border-[#808080] shadow-[1px_1px_0_#fff,inset_1px_1px_0_#fff] ${c}`}>
    <div className="-mt-[7px] ml-[6px] h-[15px] self-start bg-[#d4d0c8] px-[2px] leading-[14px] font-bold tracking-[0.08px] text-[#404040]">
      {title}
    </div>
    {children}
  </div>
);
const Spin = ({ v }: { v: string }) => (
  <div className={`flex h-[21px] w-[122px] items-center pr-[2px] pl-[3px] ${sunken}`}>
    <span className="grow">{v}</span>
    <div className="flex w-[16px] flex-col">
      {["M0 2h3v-1h-1v-1h-1v1h-1z", "M0 0h3v1h-1v1h-1v-1h-1z"].map((d) => (
        <Btn key={d} c="h-[9px] w-[16px] first:h-[8px]">
          <svg width="3" height="2" viewBox="0 0 3 2" shapeRendering="crispEdges">
            <path d={d} fill="#000" />
          </svg>
        </Btn>
      ))}
    </div>
  </div>
);
const Combo = ({ v, w }: { v: string; w: string }) => (
  <div className={`flex h-[21px] items-center pr-[2px] pl-[2px] ${w} ${sunken}`}>
    <span className="grow">{v}</span>
    <Btn c="h-[17px] w-[16px]">
      <svg width="7" height="4" viewBox="0 0 7 4">
        <path d="M0 0h7L3.500 4z" fill="#000" />
      </svg>
    </Btn>
  </div>
);
const Check = ({ c = "" }: { c?: string }) => (
  <svg width="9" height="9" viewBox="0 0 9 9" className={c}>
    <path d="M1 3.500l2.500 2.500L8 1.500" stroke="#000" strokeWidth="2" fill="none" />
  </svg>
);

const operators = [
  "+", "*", "sqrt", "cos", "sin", "tan", "log10", "(",
  "-", "/", "^", "acos", "asin", "atan", "ln", ")",
  "<", ">", "=", "!=", "<=", ">=", "AND", "OR",
];

function Dialog() {
  return (
    <div className="absolute top-[206px] left-[171px] flex h-[601px] w-[730px] flex-col border border-t-[#d4d0c8] border-r-[#404040] border-b-[#404040] border-l-[#d4d0c8] bg-[#d4d0c8] p-[3px] shadow-[inset_1px_1px_0_#fff,inset_-1px_-1px_0_#808080]">
      <div className="flex h-[18px] shrink-0 items-center bg-linear-to-r from-[#808080] to-[#c0c0c0] pr-[2px] pl-[2px]">
        <QLogo />
        <span className="ml-[2px] grow pt-px font-bold tracking-[0.1px] text-[#d4d0c8]">Raster calculator</span>
        <Btn c="h-[14px] w-[16px] text-[12px] font-bold leading-none">?</Btn>
        <Btn c="ml-[2px] h-[14px] w-[16px]">
          <svg width="8" height="8" viewBox="0 0 8 8">
            <path d="M.5.5l7 7M7.500.5l-7 7" stroke="#000" strokeWidth="1.600" />
          </svg>
        </Btn>
      </div>

      <div className="mt-[19px] flex h-[239px] shrink-0 gap-[5px] px-[11px]">
        <Box title="Raster bands" c="w-[316px]">
          <div className={`mx-[9px] mt-[9px] h-[212px] p-[2px] ${sunken}`}>
            <div className="h-[13px] bg-[#d4d0c8] pl-[2px] leading-[11px]">italy_loss_2000-2014_retiled_lzw@1</div>
          </div>
        </Box>
        <Box title="Result layer" c="w-[378px]">
          <div className="-mt-[7px] ml-[9px] w-[359px]">
            <div className="mt-[16px] flex h-[24px] items-center">
              <span className="w-[118px]">Output layer</span>
              <div className={`flex h-[21px] w-[157px] items-center justify-end overflow-hidden pr-[3px] pl-[2px] ${sunken}`}>
                <span className="flex w-[151px] justify-end overflow-hidden whitespace-nowrap">rs/geosolutions/Desktop/tmp.tif</span>
              </div>
              <Btn c="ml-[6px] h-[24px] w-[76px]">...</Btn>
            </div>
            <div className="mt-[6px] flex h-[21px] items-center">
              <span className="w-[118px]">Output format</span>
              <Combo v="GeoTIFF" w="w-[239px]" />
            </div>
            <Btn c="mt-[6px] ml-px h-[24px] w-[110px] whitespace-nowrap">Current layer extent</Btn>
            <div className="mt-[6px] flex flex-col gap-[5px]">
              {[
                ["X min", "6,62686", "XMax", "18,52019"],
                ["Y min", "35,49290", "Y max", "47,09178"],
                ["Columns", "47573", "Rows", "46396"],
              ].map((r) => (
                <div key={r[0]} className="flex h-[21px] items-center">
                  <span className="w-[47px]">{r[0]}</span>
                  <Spin v={r[1]} />
                  <span className="ml-[30px] w-[36px] whitespace-nowrap">{r[2]}</span>
                  <Spin v={r[3]} />
                </div>
              ))}
            </div>
            <div className="mt-[5px] flex h-[23px] items-center">
              <span className="w-[118px]">Output CRS</span>
              <Combo v="Selected CRS (EPSG:4326, WGS 84)" w="w-[216px] whitespace-nowrap" />
              <Btn c="ml-px h-[23px] w-[23px]">
                <Ic s={16}>
                  <ellipse cx="11" cy="11" rx="10" ry="10" fill="#a9c0d8" stroke="#7f9ab6" />
                  <path d="M1 11h20M11 1v20M3 6h16M3 16h16" stroke="#7896b4" />
                  <rect x="12" y="13" width="11" height="11" rx="2" fill="#e0bb2c" />
                  <path d="M14 22l6-7" stroke="#fff" strokeWidth="2.500" />
                </Ic>
              </Btn>
            </div>
            <div className="mt-[7px] flex h-[13px] items-center">
              <div className={`ml-px flex h-[13px] w-[13px] items-center justify-center ${sunken}`}>
                <Check />
              </div>
              <span className="ml-[5px]">Add result to project</span>
            </div>
          </div>
        </Box>
      </div>

      <div className="mr-[12px] ml-[11px] mt-[11px] flex h-[106px] shrink-0 flex-col border border-[#808080] shadow-[1px_1px_0_#fff,inset_1px_1px_0_#fff]">
        <div className="-mt-[5px] -ml-px flex h-[16px] w-[85px] items-center bg-[#d4d0c8] pl-[3px] font-bold tracking-[0.1px] text-[#404040]">
          <svg width="11" height="7" viewBox="0 0 11 7">
            <path d="M0 0h11L5.500 6.500z" fill="#303030" />
          </svg>
          <span className="ml-[7px]">Operators</span>
        </div>
        <div className="mt-[7px] ml-px grid w-max grid-cols-8 gap-x-[7px] gap-y-[7px]">
          {operators.map((o) => (
            <Btn key={o} c="h-[24px] w-[76px]">
              {o}
            </Btn>
          ))}
        </div>
      </div>

      <Box title="Raster calculator expression" c="mr-[12px] ml-[11px] mt-[13px] h-[125px] shrink-0">
        <div className={`mx-px mt-[10px] h-[106px] px-[5px] pt-[4px] leading-[16px] tracking-[-0.1px] ${sunken}`}>
          ("italy_loss_2000-2014_retiled_lzw@1"=9)*9+("italy_loss_2000-2014_retiled_lzw@1"!=9)*0
        </div>
      </Box>

      <div className="mt-[8px] ml-[10px] leading-[14px]">Expression valid</div>
      <div className="mt-[4px] mr-[12px] flex items-center justify-end gap-[7px]">
        <div className="border border-[#404040]">
          <Btn c="h-[23px] w-[75px]">OK</Btn>
        </div>
        <Btn c="h-[24px] w-[75px]">Cancel</Btn>
      </div>
    </div>
  );
}

/* ---------- page ---------- */

const menus: [string, string][] = [
  ["Project", "w-[46px]"], ["Edit", "w-[31px]"], ["View", "w-[33px]"], ["Layer", "w-[39px]"], ["Settings", "w-[51px]"],
  ["Plugins", "w-[45px]"], ["Vector", "w-[42px]"], ["Raster", "w-[44px]"], ["Database", "w-[58px]"], ["Web", "w-[34px]"],
  ["Processing", "w-[63px]"], ["Help", "w-[30px]"],
];

export default function App() {
  return (
    <div className="relative flex h-[900px] w-[1185px] flex-col overflow-hidden bg-[#d4d0c8] font-['DejaVu_Sans_Condensed','DejaVu_Sans',sans-serif] text-[11px] leading-[14px] tracking-[-0.07px] text-black">
      <div className="flex h-[18px] shrink-0 items-center bg-linear-to-r from-[#808080] to-[#b2b2b2] pl-[2px]">
        <QLogo />
        <span className="ml-[2px] pt-px font-bold tracking-[0.1px] text-[#d4d0c8]">QGIS 2.14.1-Essen - loss_mosaic</span>
      </div>
      <div className="flex h-[18px] shrink-0 items-center pt-[3px] pl-[5px] text-[#808080]">
        {menus.map(([m, w]) => (
          <span key={m} className={`shrink-0 whitespace-nowrap ${w}`}>
            {m}
          </span>
        ))}
      </div>

      <div className="flex h-[34px] shrink-0 border-t border-[#808080] shadow-[inset_0_1px_0_#fff]">
        <Bar w="w-[200px]">
          <Pick names={["fresh", "open", "save", "saveAs", "composer", "composerMgr"]} />
        </Bar>
        <Bar w="w-[386px]">
          <div className="flex h-[31px] w-[31px] shrink-0 items-center justify-center border border-t-[#808080] border-r-white border-b-white border-l-[#808080] bg-[repeating-conic-gradient(#fff_0_25%,#d4d0c8_0_50%)] bg-[length:2px_2px]">
            <Ic>{I.touch}</Ic>
          </div>
          <Pick
            names={["pan", "panSel", "zoomIn", "zoomOut", "zoomNative", "zoomFull", "zoomSel", "zoomLayer", "zoomLast", "zoomNext", "refresh"]}
          />
        </Bar>
        <Bar w="w-[477px]">
          <Pick names={["identify", "action"]} />
          <Drop />
          <Pick names={["select"]} />
          <Drop />
          <Pick names={["epsilon"]} />
          <Drop />
          <Pick names={["deselect", "table", "abacus", "sigma", "ruler"]} />
          <Drop dark />
          <Pick names={["tips", "bookmarkNew", "bookmark", "annot"]} />
          <Drop dark />
        </Bar>
        <Bar w="w-[140px]">
          <Pick names={["help"]} />
        </Bar>
      </div>

      <div className="flex h-[34px] shrink-0 border-t border-[#808080] shadow-[inset_0_1px_0_#fff]">
        <Bar w="w-[367px]">
          <Pick names={["pencils", "pencil", "saveEdits", "addPoint", "addLine"]} />
          <div className="pr-px">
            <Drop />
          </div>
          <Pick names={["move", "node", "trash", "cut", "copy", "paste"]} />
        </Bar>
        <Bar w="w-[231px]">
          <div className="flex pl-px">
            <Slot><Label tone="abc" /></Slot>
            <Slot><Label tone="hot" extra="pin" /></Slot>
            <Slot><Label tone="ab" extra="pin" /></Slot>
            <Slot><Label tone="abc" extra="eye" /></Slot>
            <Slot><Label tone="abc" extra="move" /></Slot>
            <Slot><Label tone="abc" extra="turn" /></Slot>
            <Slot><Label tone="abc" extra="edit" /></Slot>
          </div>
        </Bar>
        <Bar w="w-[45px]">
          <Slot>
            <div className="ml-[2px] flex h-[19px] w-[21px] items-center justify-center border border-[#e8e8e4] bg-white text-[8px] font-bold text-[#555] shadow-[-1px_1px_0_#bbb]">
              CSW
            </div>
          </Slot>
        </Bar>
        <div className="flex h-full items-center border-l border-l-white">
          <Grip />
          <div className="pl-px">
            <Pick names={["python"]} />
          </div>
        </div>
      </div>

      <div className="flex min-h-0 grow border-t border-[#808080]">
        <div className="flex w-[46px] shrink-0 flex-col border-t border-white">
          <div className="mt-[3px] mr-[3px] ml-[4px] h-[3px] border-t border-r border-b border-t-white border-r-[#808080] border-b-[#808080]" />
          <div className="mr-[3px] ml-[4px] h-[3px] border-t border-r border-b border-t-white border-r-[#808080] border-b-[#808080]" />
          <div className="mt-[2px] flex flex-col">
            {side.map((s, i) => (
              <div key={i} className="flex h-[30px] items-center pl-[11px]">
                <Ic>{s}</Ic>
                {i === 12 && (
                  <svg width="9" height="5" viewBox="0 0 9 5" className="-ml-px shrink-0">
                    <path d="M0 0h9L4.500 5z" fill="#000" />
                  </svg>
                )}
              </div>
            ))}
          </div>
          <div className="mt-px border-t border-b border-t-[#808080] border-b-white" />
          <div className="mt-[2px] mr-[3px] ml-[4px] h-[3px] border-t border-r border-b border-t-white border-r-[#808080] border-b-[#808080]" />
          <div className="mr-[3px] ml-[4px] h-[3px] border-t border-r border-b border-t-white border-r-[#808080] border-b-[#808080]" />
          <div className="mt-[3px] flex flex-col">
            {sideLower.map((s, i) => (
              <div key={i} className="flex h-[30px] items-center pl-[11px]">
                <Ic>{s}</Ic>
              </div>
            ))}
          </div>
        </div>

        <div className="flex w-[299px] shrink-0 flex-col border-t border-l border-t-white border-l-[#808080]">
          <div className="flex h-[18px] shrink-0 items-center pr-[7px] pl-px">
            <span className="grow pt-px">Layers Panel</span>
            <svg width="9" height="9" viewBox="0 0 9 9" fill="none" stroke="#000" className="mr-[6px] mb-[3px]">
              <path d="M2.500 3V.5h6v5H6M2.500 1h6" />
              <path d="M.5 3.500h5v5h-5zM.5 4h5" />
            </svg>
            <svg width="8" height="8" viewBox="0 0 8 8" stroke="#000" strokeWidth="1.500" className="mr-px mb-[3px]">
              <path d="M.5.5l7 7M7.500.5l-7 7" />
            </svg>
          </div>
          <div className="mr-[5px] flex h-[27px] shrink-0 items-center border border-t-[#808080] border-r-[#808080] border-b-[#808080] border-l-white pl-[4px] shadow-[inset_0_1px_0_#fff,0_1px_0_#fff]">
            <div className="flex w-[23px]">
              <Ic s={17}>
                <path d="M3 8.500h4v11H3M6.500 5.500h11v15h-11zM10 16V4.500c0-3 4-3 4 0V14" stroke="#6a7a6c" strokeWidth="1.300" fill="#dfe3de" />
                <Plus x={13} y={13} />
              </Ic>
            </div>
            <div className="flex w-[23px]">
              <Ic s={17}>
                <path d="M1 12c5-8 15-8 20 0-5 7-15 7-20 0z" fill="#e8eef4" stroke="#8a949e" />
                <circle cx="11" cy="11" r="4.500" fill="#4a6d94" />
                <path d="M14 18h8l-4 5z" fill="#000" />
              </Ic>
            </div>
            <div className="flex w-[23px]">
              <Ic s={17}>
                <path d="M2 3h19v3l-7 8v9h-5v-9L2 6z" fill="#5b8fc2" stroke="#3d6a99" />
                <path d="M1.500 1.500h20v4h-20z" fill="#f0dd50" stroke="#a3983a" />
              </Ic>
            </div>
            <div className="flex w-[19px]">
              <Ic s={17}>
                <path d="M11 4C9 .5 3 1 3 4.500c0 2 2 3 4.500 3C4 7.500 2 8.500 2 11c0 4 6 4 8.500 1" stroke="#9b9994" strokeWidth="2.200" />
                <path d="M10 14h13l-5 5v5h-3v-5z" fill="#b9b6af" />
              </Ic>
            </div>
            <Drop />
            <div className="ml-[4px] flex w-[23px]">
              <Ic s={17}>
                <path d="M2 3.500h12M2 20.500h11" stroke="#6f7173" strokeWidth="1.400" />
                <path d="M3 8h5v4H3zM3 14h5v4H3z" fill="#f0b040" />
                <path d="M14 2h4v11h4l-6 7-6-7h4z" fill="#4a80b8" stroke="#2f5a8c" />
              </Ic>
            </div>
            <div className="flex w-[23px]">
              <Ic s={17}>
                <path d="M2 3.500h9M2 20.500h11" stroke="#6f7173" strokeWidth="1.400" />
                <path d="M3 8h5v4H3zM3 14h5v4H3z" fill="#f0b040" />
                <path d="M14 21h4V9h4l-6-7-6 7h4z" fill="#4a80b8" stroke="#2f5a8c" />
              </Ic>
            </div>
            <Ic s={17}>
              <rect x="2.500" y="2.500" width="16" height="16" fill="#f3f3f1" stroke="#85837e" />
              <rect x="13.500" y="15.500" width="9" height="6" fill="#e05a60" stroke="#c43a42" />
              <path d="M15 18.500h6" stroke="#fff" strokeWidth="1.500" />
            </Ic>
          </div>
          <div className="mt-[7px] mr-[5px] flex grow flex-col border-t-2 border-r border-l-2 border-t-[#404040] border-r-white border-l-[#404040] bg-white">
            <div className="flex h-[16px] items-center pl-[6px]">
              <svg width="15" height="9" viewBox="0 0 15 9" shapeRendering="crispEdges">
                <rect x=".5" y=".5" width="8" height="8" fill="#fff" stroke="#808080" />
                <path d="M2 4.500h5M4.500 2v5" stroke="#000" />
                <path d="M10 4.500h5" stroke="#808080" strokeDasharray="1 1" />
              </svg>
              <div className="ml-[3px] flex h-[12px] w-[12px] items-center justify-center border border-black bg-white">
                <Check />
              </div>
              <svg width="16" height="16" viewBox="0 0 16 16" className="ml-[5px]">
                <Checks x={0} y={0} c={4} flip={1} />
              </svg>
              <span className="ml-[6px] font-bold tracking-[0.32px] whitespace-nowrap">italy_loss_2000-2014_retiled_lzw</span>
            </div>
          </div>
        </div>

        <div className="min-w-0 grow border-t-2 border-l-3 border-t-[#505050] border-l-[#505050] bg-white">
          <svg width="837" height="793" viewBox="0 0 837 793" shapeRendering="crispEdges">
            <path d={pixels.dim} fill="#c01a30" />
            <path d={pixels.bright} fill="#ee0a14" />
          </svg>
        </div>
      </div>

      <Dialog />
    </div>
  );
}
